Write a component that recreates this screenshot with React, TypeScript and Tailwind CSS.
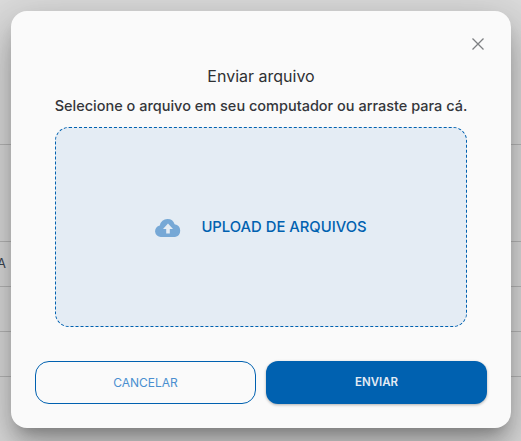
import React from 'react';

const rows = [
  { h: 145, label: '' },
  { h: 97, label: '' },
  { h: 45, label: 'A' },
  { h: 45, label: '' },
  { h: 45, label: '' },
];

const UploadModal: React.FC = () => {
  return (
    <div className="absolute left-[11px] top-[11px] flex h-[417px] w-[500px] flex-col rounded-[16px] bg-[#fafafa] px-6 pt-6 pb-6 shadow-[0px_11px_15px_-7px_rgba(0,0,0,0.28),0px_24px_38px_3px_rgba(0,0,0,0.18),0px_9px_46px_8px_rgba(0,0,0,0.12)]">
      <div className="flex justify-end">
        <button className="flex h-[18px] w-[18px] items-center justify-center text-[#7d7f82]">
          <svg width="14" height="14" viewBox="0 0 14 14" fill="none" stroke="currentColor" strokeWidth="1.3">
            <path d="M1.5 1.5L12.5 12.5M12.5 1.5L1.5 12.5" />
          </svg>
        </button>
      </div>

      <h2 className="mt-[11px] text-center text-[16px] leading-6 font-normal text-[#2e3033]">Enviar arquivo</h2>
      <p className="mt-[8px] text-center text-[14.5px] leading-5 font-medium text-[#34363a]">
        Selecione o arquivo em seu computador ou arraste para cá.
      </p>

      <div className="mx-5 mt-[11px] flex h-[200px] items-center justify-center gap-5 rounded-[14px] border border-dashed border-[#0061b0] bg-[#e4ecf4]">
        <svg width="26" height="19" viewBox="0 0 26 19" className="text-[#76a8d6]">
          <path
            fill="currentColor"
            d="M6 19a5.8 5.8 0 0 1-1.2-11.5A7.6 7.6 0 0 1 12.6 1a7.4 7.4 0 0 1 7 5.2A6.5 6.5 0 0 1 20 19Z"
          />
          <path fill="#e4ecf4" d="M13 5.6l5 5.4h-3.2v4.6h-3.6V11H8Z" />
        </svg>
        <span className="text-[14.8px] font-medium text-[#0061b0]">UPLOAD DE ARQUIVOS</span>
      </div>

      <div className="mt-auto flex justify-between">
        <button className="h-[43px] w-[221px] rounded-[14px] border border-[#0061b0] text-[12px] font-normal text-[#4a8fd0]">
          CANCELAR
        </button>
        <button className="h-[43px] w-[221px] rounded-[12px] bg-[#0061b0] text-[11.5px] font-semibold text-[#e4ecf4] shadow-[0_1px_3px_rgba(0,0,0,0.3)]">
          ENVIAR
        </button>
      </div>
    </div>
  );
};

export default function App() {
  return (
    <div className="relative h-[441px] w-[521px] overflow-hidden bg-[#dcdcdc] font-['Inter','Liberation_Sans',sans-serif]">
      <div className="flex flex-col">
        {rows.map((row, i) => (
          <div
            key={i}
            style={{ height: row.h }}
            className="flex items-center border-b border-[#b8b8b8] text-[13px] text-[#3c4652]"
          >
            {row.label && <span className="-ml-[3px]">{row.label}</span>}
          </div>
        ))}
      </div>
      <UploadModal />
    </div>
  );
}
